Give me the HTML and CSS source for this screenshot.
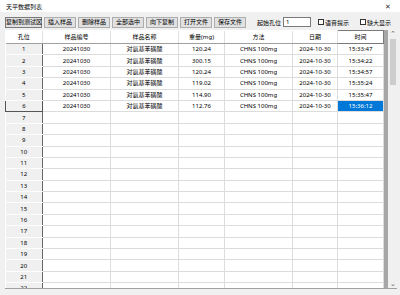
FILE: index.html
```html
<!DOCTYPE html>
<html>
<head>
  <title>天平数据列表</title>
  <link rel="stylesheet" href="styles.css">
</head>
<body>
  <div class="window">
    <div class="titlebar">
      <span class="title">天平数据列表</span>
      <span class="close">&#10005;</span>
    </div>

    <div class="toolbar">
      <button class="first">复制到测试区</button>
      <button>插入样品</button>
      <button>删除样品</button>
      <button>全部选中</button>
      <button>向下复制</button>
      <button>打开文件</button>
      <button>保存文件</button>
      <label class="start">起始孔位 <input type="text" value="1"></label>
      <label class="check"><span class="box"></span>语音提示</label>
      <label class="check"><span class="box"></span>缺大显示</label>
    </div>

    <div class="grid-wrap">
      <table class="grid">
        <colgroup>
          <col class="c-pos"><col class="c-id"><col class="c-name"><col class="c-weight">
          <col class="c-method"><col class="c-date"><col class="c-time">
        </colgroup>
        <thead>
          <tr>
            <th>孔位</th><th>样品编号</th><th>样品名称</th><th>重量(mg)</th>
            <th>方法</th><th>日期</th><th class="active-col">时间</th>
          </tr>
        </thead>
        <tbody>
          <tr><th>1</th><td>20241030</td><td>对氨基苯磺酸</td><td>120.24</td><td>CHNS 100mg</td><td>2024-10-30</td><td>15:33:47</td></tr>
          <tr><th>2</th><td>20241030</td><td>对氨基苯磺酸</td><td>300.15</td><td>CHNS 100mg</td><td>2024-10-30</td><td>15:34:22</td></tr>
          <tr><th>3</th><td>20241030</td><td>对氨基苯磺酸</td><td>120.24</td><td>CHNS 100mg</td><td>2024-10-30</td><td>15:34:57</td></tr>
          <tr><th>4</th><td>20241030</td><td>对氨基苯磺酸</td><td>119.02</td><td>CHNS 100mg</td><td>2024-10-30</td><td>15:35:24</td></tr>
          <tr><th>5</th><td>20241030</td><td>对氨基苯磺酸</td><td>114.90</td><td>CHNS 100mg</td><td>2024-10-30</td><td>15:35:47</td></tr>
          <tr class="current"><th>6</th><td>20241030</td><td>对氨基苯磺酸</td><td>112.76</td><td>CHNS 100mg</td><td>2024-10-30</td><td class="selected">15:36:12</td></tr>
          <tr><th>7</th><td></td><td></td><td></td><td></td><td></td><td></td></tr>
          <tr><th>8</th><td></td><td></td><td></td><td></td><td></td><td></td></tr>
          <tr><th>9</th><td></td><td></td><td></td><td></td><td></td><td></td></tr>
          <tr><th>10</th><td></td><td></td><td></td><td></td><td></td><td></td></tr>
          <tr><th>11</th><td></td><td></td><td></td><td></td><td></td><td></td></tr>
          <tr><th>12</th><td></td><td></td><td></td><td></td><td></td><td></td></tr>
          <tr><th>13</th><td></td><td></td><td></td><td></td><td></td><td></td></tr>
          <tr><th>14</th><td></td><td></td><td></td><td></td><td></td><td></td></tr>
          <tr><th>15</th><td></td><td></td><td></td><td></td><td></td><td></td></tr>
          <tr><th>16</th><td></td><td></td><td></td><td></td><td></td><td></td></tr>
          <tr><th>17</th><td></td><td></td><td></td><td></td><td></td><td></td></tr>
          <tr><th>18</th><td></td><td></td><td></td><td></td><td></td><td></td></tr>
          <tr><th>19</th><td></td><td></td><td></td><td></td><td></td><td></td></tr>
          <tr><th>20</th><td></td><td></td><td></td><td></td><td></td><td></td></tr>
          <tr><th>21</th><td></td><td></td><td></td><td></td><td></td><td></td></tr>
          <tr><th>22</th><td></td><td></td><td></td><td></td><td></td><td></td></tr>
        </tbody>
      </table>
      <div class="vscroll">
        <span class="arrow">&#8963;</span>
        <span class="thumb"></span>
        <span class="arrow down">&#8964;</span>
      </div>
    </div>
  </div>
</body>
</html>
```

FILE: styles.css
```css
* {
  box-sizing: border-box;
}

html, body {
  margin: 0;
  padding: 0;
}

body {
  width: 400px;
  height: 295px;
  overflow: hidden;
  font-family: "Noto Sans", "Noto Sans CJK SC", sans-serif;
  font-size: 6px;
  color: #000;
  background: #f0f0f0;
}

.window {
  height: 295px;
  display: flex;
  flex-direction: column;
}

.titlebar {
  height: 12px;
  background: #fff;
  display: flex;
  align-items: center;
  justify-content: space-between;
  padding: 0 9px 0 6px;
}

.title {
  font-size: 6px;
}

.close {
  font-size: 7px;
  color: #333;
}

.toolbar {
  display: flex;
  align-items: center;
  gap: 2px;
  padding: 3px 0 0 5px;
  height: 17px;
  white-space: nowrap;
}

.toolbar > * {
  flex-shrink: 0;
}

.toolbar button {
  height: 11px;
  width: 32px;
  padding: 0;
  border: 1px solid #adadad;
  background: #e1e1e1;
  font-family: inherit;
  font-size: 6px;
  line-height: 9px;
  color: #000;
  white-space: nowrap;
}

.toolbar button.first {
  width: 37px;
  border-color: #7a7a7a;
}

.start {
  display: flex;
  align-items: center;
  gap: 2px;
  margin-left: 9px;
}

.start input {
  width: 28px;
  height: 10px;
  border: 1px solid #7a7a7a;
  background: #fff;
  font-family: inherit;
  font-size: 6px;
  padding: 0 2px;
}

.check {
  display: flex;
  align-items: center;
  gap: 1px;
  margin-left: 5px;
}

.check + .check {
  margin-left: 9px;
}

.box {
  width: 6px;
  height: 6px;
  border: 1px solid #333;
  background: #fff;
}

.grid-wrap {
  margin: 1px 0 0 5px;
  width: 392px;
  height: 259px;
  display: flex;
  overflow: hidden;
  border-bottom: 1px solid #a0a0a0;
}

.grid {
  width: 378px;
  border-collapse: collapse;
  table-layout: fixed;
  background: #fff;
  align-self: flex-start;
}

.c-pos { width: 37px; }
.c-id { width: 68px; }
.c-name { width: 68px; }
.c-weight { width: 46px; }
.c-method { width: 68px; }
.c-date { width: 45px; }
.c-time { width: 46px; }

.grid th,
.grid td {
  padding: 0;
  height: 11.4px;
  line-height: 10px;
  text-align: center;
  font-weight: normal;
  white-space: nowrap;
  overflow: hidden;
}

.grid td {
  border-right: 1px solid #dcdcdc;
  border-bottom: 1px solid #dcdcdc;
}

.grid thead th {
  height: 13px;
  background: #fff;
  border-right: 1px solid #e0e0e0;
  border-bottom: 1px solid #a0a0a0;
}

.grid thead th.active-col {
  border: 1px solid #7a7a7a;
}

.grid tbody th {
  background: #f0f0f0;
  border-bottom: 1px solid #fdfdfd;
  border-right: 1px solid #696969;
}

.grid tr.current th {
  border: 1px solid #555;
}

.grid td.selected {
  background: #0078d7;
  color: #fff;
}

.vscroll {
  width: 14px;
  display: flex;
  flex-direction: column;
  align-items: center;
  background: #f0f0f0;
  border-left: 4px solid #a6a6a6;
}

.arrow {
  font-size: 7px;
  line-height: 8px;
  color: #606060;
}

.thumb {
  width: 6px;
  height: 46px;
  background: #cdcdcd;
  margin-top: 1px;
}

.arrow.down {
  margin-top: auto;
}
```
